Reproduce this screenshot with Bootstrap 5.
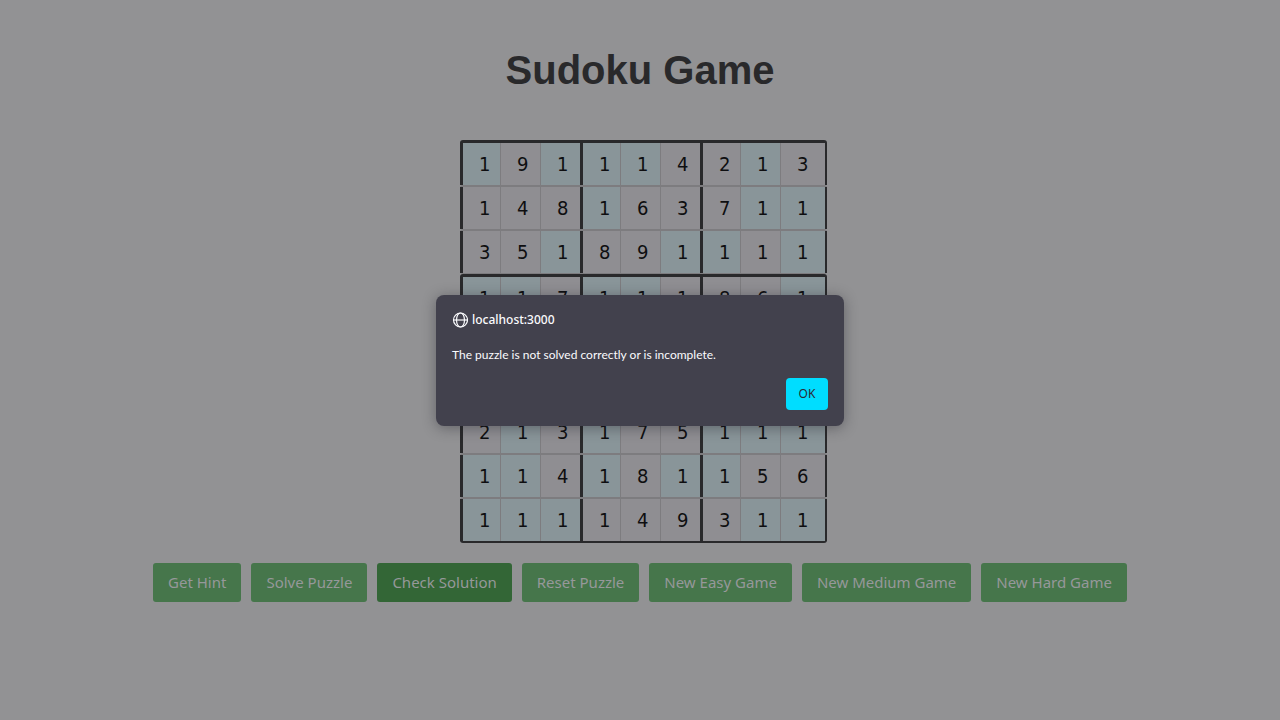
<!DOCTYPE html>
<html lang="en">
<head>
<meta charset="utf-8">
<meta name="viewport" content="width=device-width, initial-scale=1">
<title>Sudoku Game</title>
<link href="https://cdn.jsdelivr.net/npm/bootstrap@5.3.0/dist/css/bootstrap.min.css" rel="stylesheet">
<style>
  body { background: #929294; font-family: "Noto Sans", sans-serif; color: #29292b; }
  .game-title { font: bold 40px/44px "Liberation Sans", Arial, sans-serif; }
  .board { width: 360px; margin: 48px auto 20px; }
  .board-row { width: 367px; border-top: 2px solid #7d7c7f; border-radius: 3px; }
  .board-row.band { border-top: 3px solid #29292b; }
  .board-row.band-end { border-bottom: 1px solid #7d7c7f; }
  .board-row.final { border-bottom: 2px solid #29292b; }
  .cell {
    width: 40px; height: 42px; padding: 0 0 0 16px; border: 0; border-left: 1px solid #7d7c7f; border-radius: 0;
    background: #8f8e92; color: #0e0e10; outline: 0;
    font: 20px/42px "DejaVu Sans Condensed", "DejaVu Sans", sans-serif;
  }
  .cell.open { background: #899599; }
  .cell.box-start { border-left: 3px solid #29292b; }
  .cell.edge { width: 47px; border-right: 2px solid #29292b; }
  .game-actions { gap: 10px; }
  .btn-game {
    --bs-btn-bg: #46764b; --bs-btn-color: #96989a; --bs-btn-border-width: 0;
    --bs-btn-hover-bg: #336636; --bs-btn-hover-color: #96989a;
    --bs-btn-padding-x: 15px; --bs-btn-padding-y: 9px;
    --bs-btn-line-height: 21px; --bs-btn-font-size: 15px; --bs-btn-border-radius: 3px;
  }
  .btn-game.current { --bs-btn-bg: #336636; }
  .alert-box {
    top: 295px; width: 408px; padding: 16px; border-radius: 8px; background: #42414d; color: #fbfbfe;
    box-shadow: 0 2px 14px rgba(28, 27, 34, .4); font: 12px/18px "Noto Sans", sans-serif;
  }
  .host { font-weight: 500; line-height: 17px; }
  .message { margin: 18px 0 14px; font-family: Lato, sans-serif; }
  .btn-ok {
    --bs-btn-bg: #00ddff; --bs-btn-color: #2b2a33; --bs-btn-border-width: 0; --bs-btn-hover-bg: #80ebff;
    --bs-btn-padding-x: 12px; --bs-btn-padding-y: 7px; --bs-btn-line-height: 18px;
    --bs-btn-font-size: 12px; --bs-btn-border-radius: 4px; min-width: 42px;
  }
</style>
</head>
<body class="position-relative min-vh-100">
<main class="container-fluid pt-5 text-center">
  <h1 class="game-title mb-0">Sudoku Game</h1>
  <div class="board" id="board"></div>
  <div class="d-flex flex-wrap justify-content-center game-actions">
    <button type="button" class="btn btn-game">Get Hint</button>
    <button type="button" class="btn btn-game">Solve Puzzle</button>
    <button type="button" class="btn btn-game current">Check Solution</button>
    <button type="button" class="btn btn-game">Reset Puzzle</button>
    <button type="button" class="btn btn-game">New Easy Game</button>
    <button type="button" class="btn btn-game">New Medium Game</button>
    <button type="button" class="btn btn-game">New Hard Game</button>
  </div>
</main>

<div class="alert-box position-absolute start-50 translate-middle-x" role="alertdialog" aria-labelledby="host" aria-describedby="msg">
  <div class="d-flex align-items-center gap-1">
    <svg width="16" height="16" viewBox="0 0 16 16" fill="none" stroke="#fbfbfe" stroke-width="1.2" aria-hidden="true">
      <circle cx="8.5" cy="8" r="7"/>
      <ellipse cx="8.5" cy="8" rx="4" ry="7"/>
      <path d="M1.5 8h14"/>
    </svg>
    <div class="host" id="host">localhost:3000</div>
  </div>
  <p class="message" id="msg">The puzzle is not solved correctly or is incomplete.</p>
  <div class="d-flex justify-content-end"><button type="button" class="btn btn-ok">OK</button></div>
</div>

<script src="https://cdn.jsdelivr.net/npm/bootstrap@5.3.0/dist/js/bootstrap.bundle.min.js"></script>
<script>
  // One string per row of values; the second marks editable squares with "o".
  const rows = [
    ["191114213", "o.ooo..o."],
    ["148163711", "...o...oo"],
    ["351891111", "..o..oo.o"],
    ["117111861", "oo.oo...o"],
    ["         ", "........."],
    ["         ", "........."],
    ["213175111", ".o.o..ooo"],
    ["114181156", "oo.o.oo.."],
    ["111149311", "ooo....oo"]
  ];
  const board = document.getElementById("board");
  rows.forEach(([values, open], r) => {
    const row = document.createElement("div");
    row.className = "board-row d-flex" + (r % 3 === 0 ? " band" : "") +
      (r === 8 ? " final" : r % 3 === 2 ? " band-end" : "");
    [...values].forEach((value, c) => {
      const input = document.createElement("input");
      input.type = "text";
      input.maxLength = 1;
      input.value = value.trim();
      input.readOnly = open[c] !== "o";
      input.setAttribute("aria-label", `Row ${r + 1}, column ${c + 1}`);
      input.className = "cell flex-shrink-0" + (open[c] === "o" ? " open" : "") +
        (c % 3 === 0 ? " box-start" : "") + (c === 8 ? " edge" : "");
      row.append(input);
    });
    board.append(row);
  });
</script>
</body>
</html>
